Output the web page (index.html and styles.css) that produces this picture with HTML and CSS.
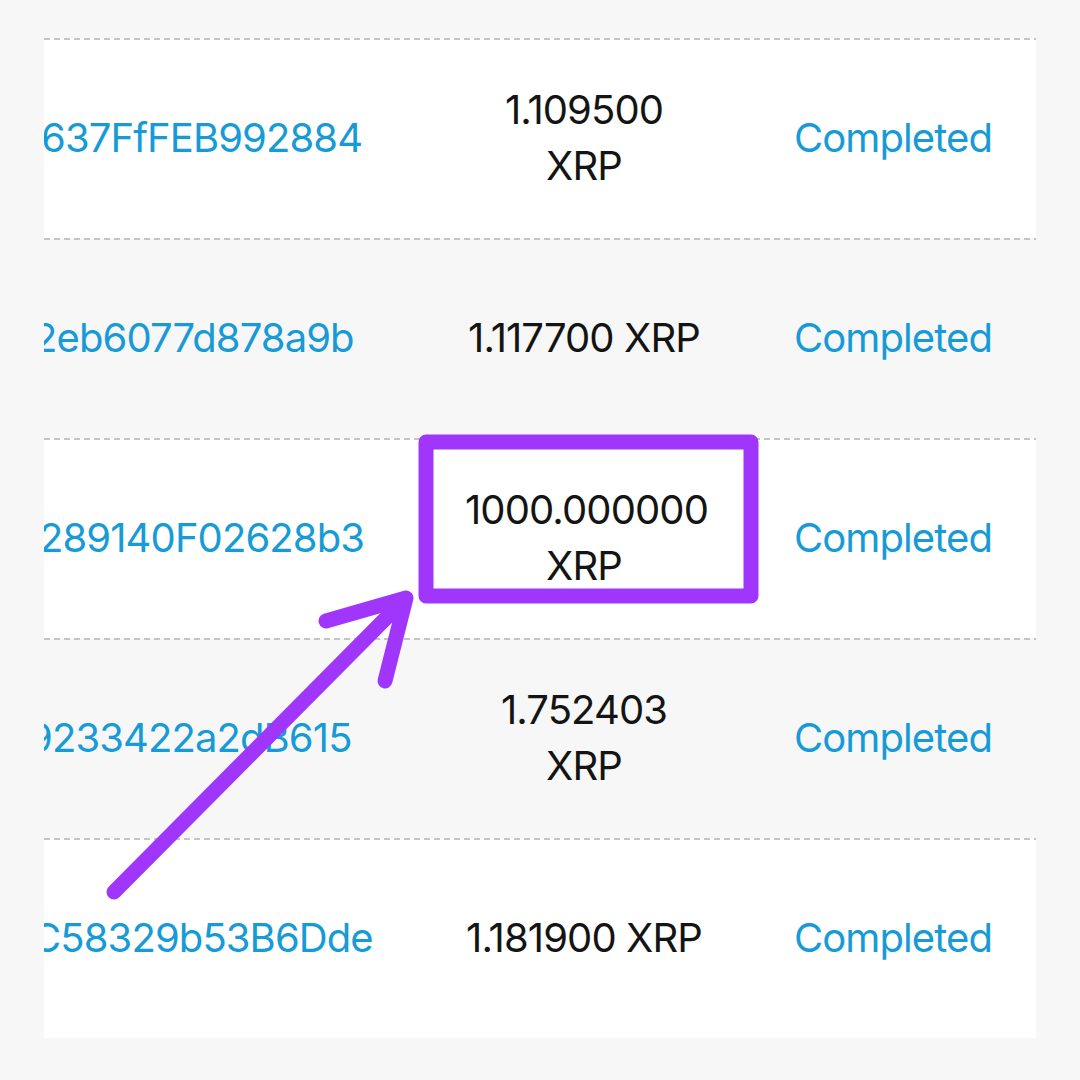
FILE: index.html
```html
<!DOCTYPE html>
<html lang="en">
<head>
<meta charset="utf-8">
<title>Transactions</title>
<link rel="stylesheet" href="styles.css">
</head>
<body>
<div class="page">
  <div class="table">
    <div class="row row--light">
      <div class="cell addr"><span class="addr-text shift-a">637FfFEB992884</span></div>
      <div class="cell amount">1.109500 XRP</div>
      <div class="cell status">Completed</div>
    </div>
    <div class="row row--shade">
      <div class="cell addr"><span class="addr-text shift-b">2eb6077d878a9b</span></div>
      <div class="cell amount">1.117700 XRP</div>
      <div class="cell status">Completed</div>
    </div>
    <div class="row row--light">
      <div class="cell addr"><span class="addr-text shift-c">289140F02628b3</span></div>
      <div class="cell amount">1000.000000 XRP</div>
      <div class="cell status">Completed</div>
    </div>
    <div class="row row--shade">
      <div class="cell addr"><span class="addr-text shift-d">9233422a2dB615</span></div>
      <div class="cell amount">1.752403 XRP</div>
      <div class="cell status">Completed</div>
    </div>
    <div class="row row--light row--last">
      <div class="cell addr"><span class="addr-text shift-e">C58329b53B6Dde</span></div>
      <div class="cell amount">1.181900 XRP</div>
      <div class="cell status">Completed</div>
    </div>
  </div>

  <svg class="annotation" width="1080" height="1080" viewBox="0 0 1080 1080" aria-hidden="true">
    <rect x="426" y="442" width="325" height="154" fill="none" stroke="#a036fb" stroke-width="15" stroke-linejoin="round"/>
    <line x1="114" y1="892" x2="404" y2="600" stroke="#a036fb" stroke-width="15" stroke-linecap="round"/>
    <polyline points="326,621 406,598 385,681" fill="none" stroke="#a036fb" stroke-width="15" stroke-linecap="round" stroke-linejoin="round"/>
  </svg>
</div>
</body>
</html>
```

FILE: styles.css
```css
* {
  box-sizing: border-box;
}

html, body {
  margin: 0;
  padding: 0;
  background: #f7f7f7;
}

body {
  font-family: "Inter", "Noto Sans", "Liberation Sans", sans-serif;
  font-size: 40px;
  line-height: 56px;
  letter-spacing: -0.9px;
  color: #141414;
}

.page {
  position: relative;
  width: 1080px;
  height: 1080px;
  padding: 38px 44px 0;
  overflow: hidden;
}

.table {
  width: 992px;
  overflow: hidden;
}

.row {
  position: relative;
  display: grid;
  grid-template-columns: 374px 332px 286px;
  height: 200px;
  align-items: center;
}

.row::before,
.row--last::after {
  content: "";
  position: absolute;
  left: 0;
  right: 0;
  height: 2px;
  background: repeating-linear-gradient(to right, #c4c4c4 0 6px, transparent 6px 10px);
}

.row::before {
  top: 0;
}

.row--last::after {
  bottom: -2px;
}

.row--light {
  background: #ffffff;
}

.row--shade {
  background: #f7f7f7;
}

.cell {
  min-width: 0;
}

.addr {
  overflow: hidden;
  white-space: nowrap;
  color: #179bd7;
}

.addr-text {
  display: inline-block;
}

.shift-a { margin-left: -3px; }
.shift-b { margin-left: -11px; }
.shift-c { margin-left: -5px; }
.shift-d { margin-left: -16px; }
.shift-e { margin-left: -12px; }

.amount {
  text-align: center;
  padding: 0 47px;
}

.status {
  text-align: center;
  color: #179bd7;
  white-space: nowrap;
}

.annotation {
  position: absolute;
  left: 0;
  top: 0;
  pointer-events: none;
}
```
